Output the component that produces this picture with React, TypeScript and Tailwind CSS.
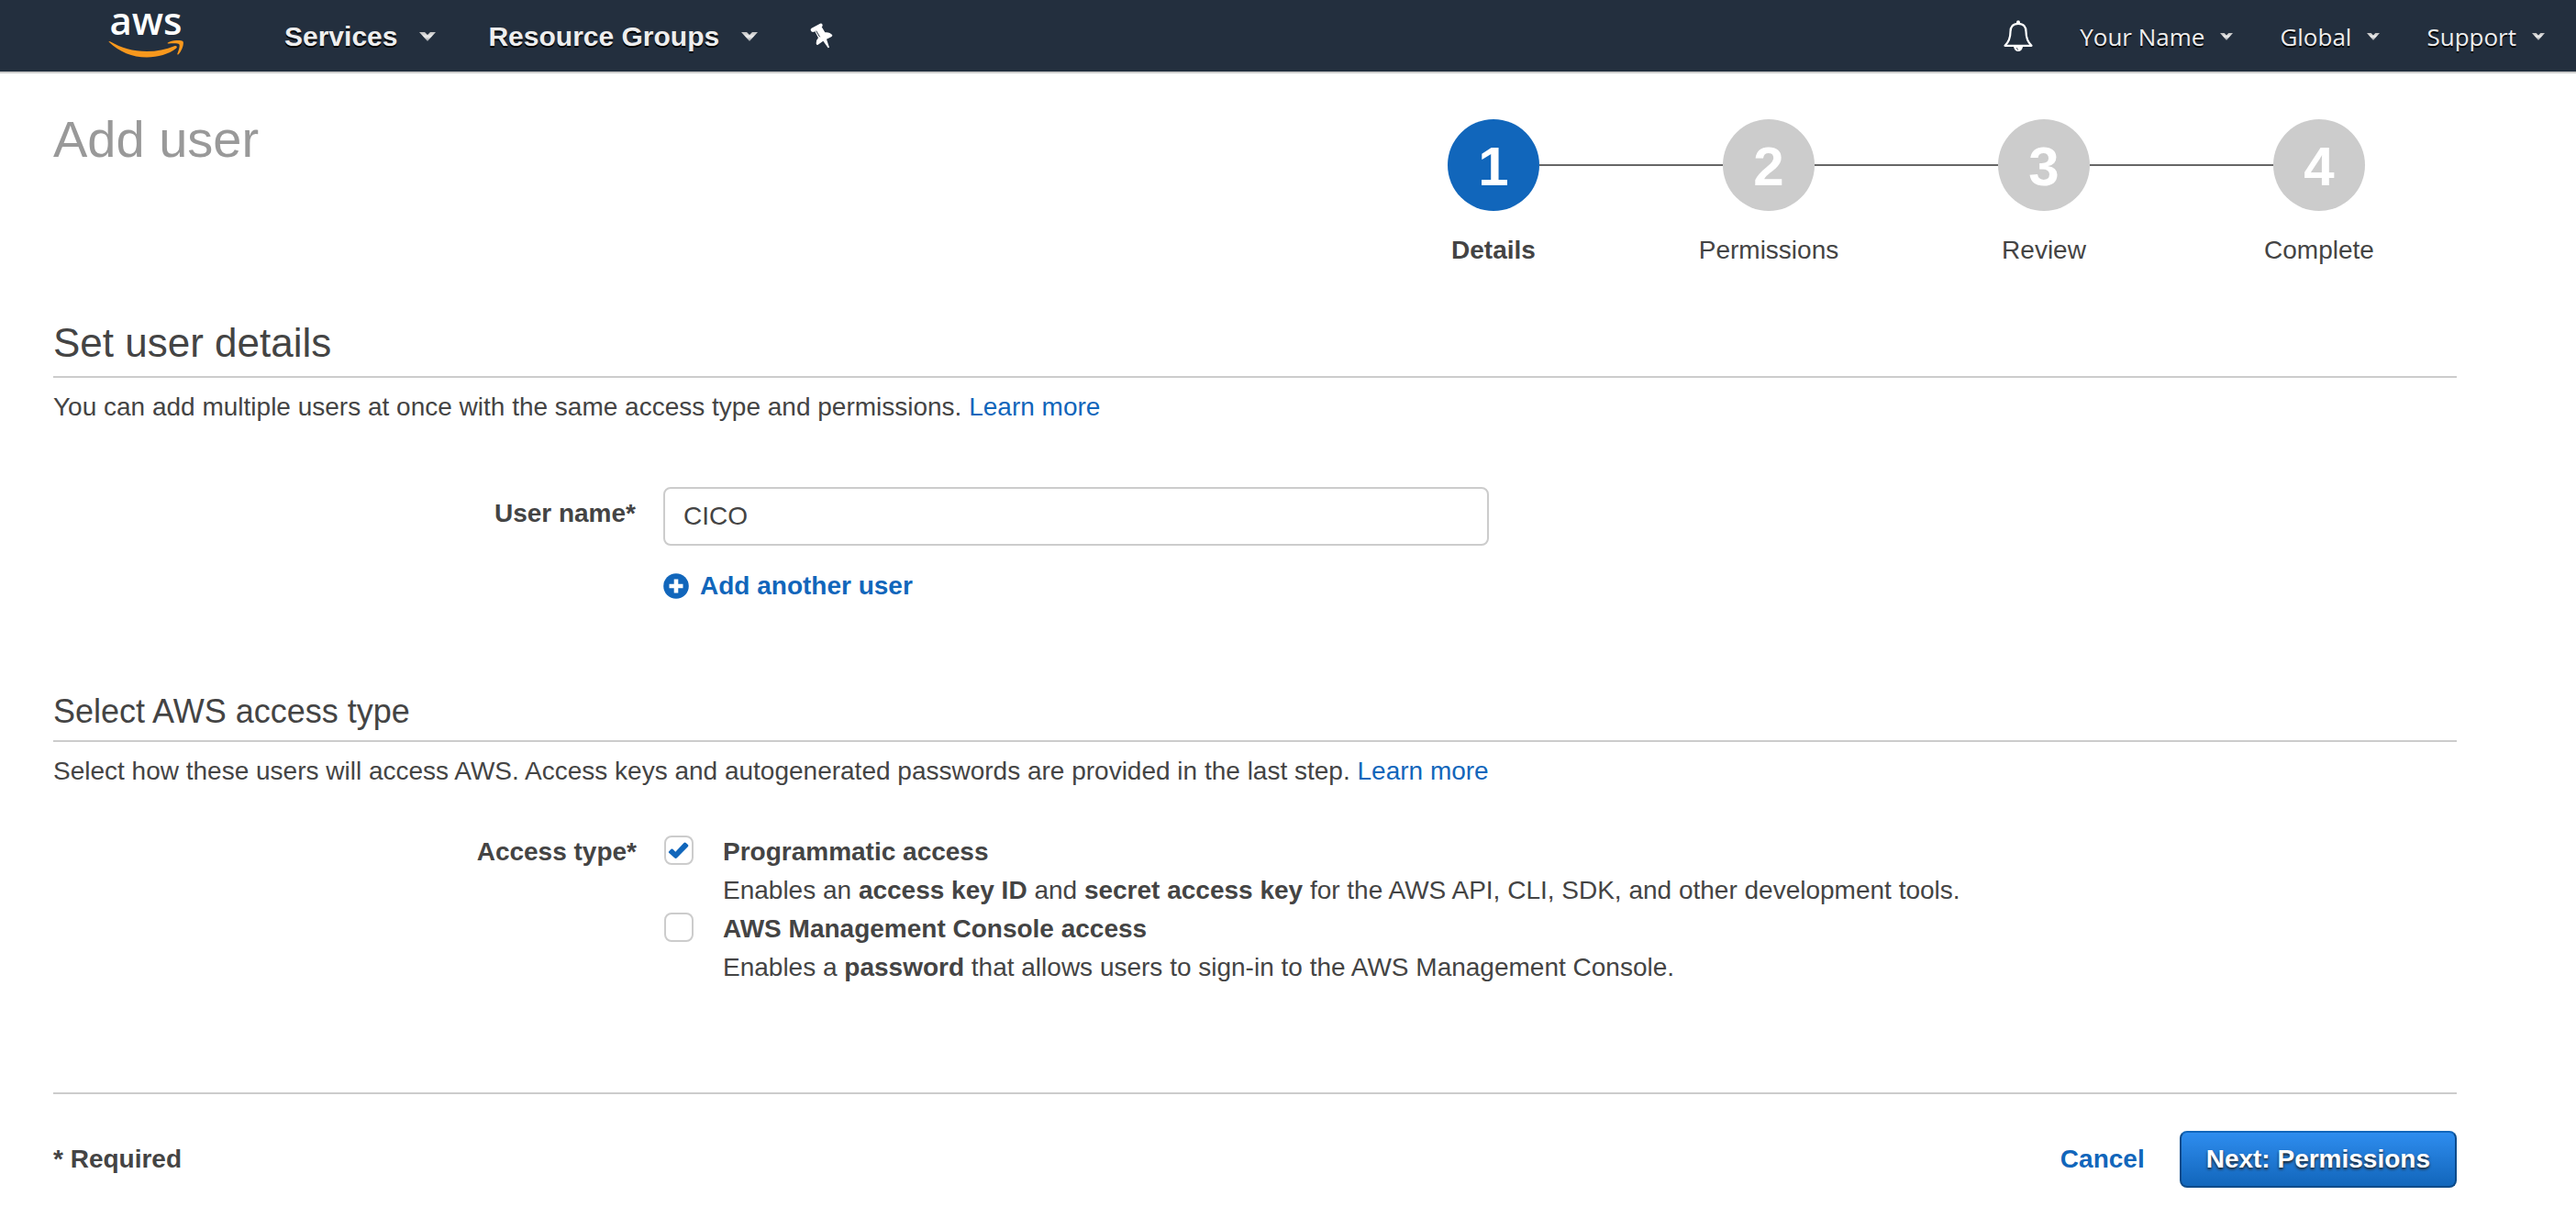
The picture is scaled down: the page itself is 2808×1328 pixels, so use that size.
import { useState, type ReactNode } from 'react';

function Caret({ small = false }: { small?: boolean }) {
  return (
    <svg viewBox="0 0 18 10" className={small ? 'h-2 w-3.5' : 'h-2.5 w-[18px]'} aria-hidden="true">
      <defs>
        <linearGradient id={small ? 'caret-s' : 'caret-l'} x1="0" y1="0" x2="0" y2="1">
          <stop offset="0" stopColor="#bfbfbf" />
          <stop offset="0.5" stopColor="#efefef" />
          <stop offset="1" stopColor="#8d9299" />
        </linearGradient>
      </defs>
      <path
        d="M0 0H6L9 3L12 0H18L9 10Z"
        fill={small ? 'url(#caret-s)' : 'url(#caret-l)'}
      />
    </svg>
  );
}

function Logo() {
  return (
    <a href="#" aria-label="aws" className="flex w-[82px] flex-col items-center pb-4">
      <span className="h-11 font-['Open_Sans',sans-serif] text-[42px] leading-[44px] font-semibold text-white">
        aws
      </span>
      <svg viewBox="0 0 82 19" className="h-[19px] w-[82px]" fill="#f8981d" aria-hidden="true">
        <path d="M1 2C0 1 1 0.5 2.5 1.5C14 8 27 12 42 12C53 12 63 10 72 6.2C74 5.4 76 7 74 8.8C66 15 54 18.500 42 18.500C26 18.500 12 12.500 1 2Z" />
        <path d="M65 2.500C70 -0.500 80 -0.800 81.500 1.200C82.800 3.500 80.500 11.500 76.500 15.200C75.800 15.800 75 15.300 75.400 14.500C76.500 11.500 78.500 6 77.300 4.300C76 2.700 70 3.100 66 3.500C64.800 3.600 64.200 3 65 2.500Z" />
      </svg>
    </a>
  );
}

function Pin() {
  return (
    <svg viewBox="0 0 75 84" className="h-7 w-[25px]" aria-hidden="true">
      <path
        d="M2 24Q1 19 5 17L33 2Q41 0 41 8Q41 11 38 13L49 31Q64 29 73 40Q73 44 69 46L54 53L63 80L59 82L43 59L26 71Q21 74 20 67Q19 57 27 49L16 28L10 30Q4 30 2 24Z"
        fill="#fff"
      />
      <path d="M20 26L32 46" stroke="#232f3e" strokeWidth="3" />
    </svg>
  );
}

function Bell() {
  return (
    <svg viewBox="0 0 32 34" className="h-[34px] w-8" fill="none" aria-hidden="true">
      <circle cx="16" cy="2.200" r="2" fill="#fff" />
      <path
        d="M16 3.800C10 3.800 7.500 7.500 7.500 12.500C7.500 20 5.500 24 1.500 27.800H30.500C26.500 24 24.500 20 24.500 12.500C24.500 7.500 22 3.800 16 3.800Z"
        stroke="#fff"
        strokeWidth="2.200"
        strokeLinejoin="round"
      />
      <path d="M11 29H21Q20 34 16 34Q12 34 11 29Z" fill="#fff" />
      <path d="M14.500 30Q14.500 32 16 32.500" stroke="#232f3e" strokeWidth="0.800" />
    </svg>
  );
}

function PrimaryMenu({ children }: { children: ReactNode }) {
  return (
    <button className="flex items-center gap-6 pt-0.5 text-[30px] leading-10 font-bold whitespace-nowrap text-[#eee] [text-shadow:0_2px_0_#000]">
      {children}
      <Caret />
    </button>
  );
}

function SecondaryMenu({ children }: { children: ReactNode }) {
  return (
    <button className="flex items-center gap-[17px] pt-0.5 font-['Open_Sans',sans-serif] text-[26px] leading-10 font-medium whitespace-nowrap text-[#eee] [text-shadow:0_2px_0_#000]">
      {children}
      <Caret small />
    </button>
  );
}

function Header() {
  return (
    <header className="flex h-20 items-center justify-between border-b-2 border-[#ccc] bg-[#232f3e] pr-[34px] pl-[118px]">
      <nav className="flex items-center" aria-label="Main">
        <Logo />
        <div className="ml-[110px] flex items-center gap-[57px]">
          <PrimaryMenu>Services</PrimaryMenu>
          <PrimaryMenu>Resource Groups</PrimaryMenu>
          <button aria-label="Pin shortcuts">
            <Pin />
          </button>
        </div>
      </nav>
      <div className="flex items-center gap-[51px]">
        <button aria-label="Notifications">
          <Bell />
        </button>
        <SecondaryMenu>Your Name</SecondaryMenu>
        <SecondaryMenu>Global</SecondaryMenu>
        <SecondaryMenu>Support</SecondaryMenu>
      </div>
    </header>
  );
}

const steps = ['Details', 'Permissions', 'Review', 'Complete'];

function Stepper() {
  return (
    <ol className="grid w-[1200px] grid-cols-4">
      {steps.map((label, i) => (
        <li key={label} className="flex flex-col items-center">
          <div className="flex w-full items-center">
            <span className={i === 0 ? 'h-0.5 flex-1' : 'h-0.5 flex-1 bg-[#666]'} />
            <span
              className={
                i === 0
                  ? 'flex size-[100px] items-center justify-center rounded-full bg-[#1166bb] pt-1 text-[60px] leading-[60px] font-bold text-white'
                  : 'flex size-[100px] items-center justify-center rounded-full bg-[#ccc] pt-1 text-[60px] leading-[60px] font-bold text-white'
              }
            >
              {i + 1}
            </span>
            <span className={i === steps.length - 1 ? 'h-0.5 flex-1' : 'h-0.5 flex-1 bg-[#666]'} />
          </div>
          <span className={i === 0 ? 'mt-[22px] font-bold' : 'mt-[22px]'}>{label}</span>
        </li>
      ))}
    </ol>
  );
}

function LearnMore() {
  return (
    <a href="#" className="text-[#1166bb]">
      Learn more
    </a>
  );
}

type AccessOptionProps = {
  id: string;
  title: string;
  defaultChecked?: boolean;
  children: ReactNode;
};

function AccessOption({ id, title, defaultChecked, children }: AccessOptionProps) {
  return (
    <div className="flex items-start gap-8">
      <span className="mt-[3px] grid size-8 shrink-0">
        <input
          id={id}
          type="checkbox"
          defaultChecked={defaultChecked}
          className="peer col-start-1 row-start-1 size-8 appearance-none rounded-lg border-2 border-[#ccc] bg-white"
        />
        <svg
          viewBox="0 0 32 32"
          className="pointer-events-none invisible col-start-1 row-start-1 size-8 peer-checked:visible"
          fill="#1166bb"
          aria-hidden="true"
        >
          <path d="M5 17.500L7.500 14.800Q8.500 14 9.400 14.800L12.300 17.800L21.500 8Q22.600 7.200 23.700 8L26 10Q26.800 11 26 12L14 24.300Q12.600 25.600 11.200 24.300L5 18.700Q4.500 18.100 5 17.500Z" />
        </svg>
      </span>
      <div>
        <label htmlFor={id} className="block font-bold">
          {title}
        </label>
        <p>{children}</p>
      </div>
    </div>
  );
}

export default function App() {
  const [name, setName] = useState('CICO');

  return (
    <div className="min-h-screen bg-white font-['Liberation_Sans',Arial,sans-serif] text-[28px] leading-[42px] text-[#444]">
      <Header />
      <main className="pr-[130px] pl-[58px]">
        <div className="flex items-start justify-between pt-10">
          <h1 className="text-[56px] leading-[64px] text-[#999]">Add user</h1>
          <div className="pt-2.5">
            <Stepper />
          </div>
        </div>

        <section className="mt-[54px]">
          <h2 className="border-b-2 border-[#ccc] pb-2.5 text-[44px] leading-[52px]">
            Set user details
          </h2>
          <p className="mt-[11px]">
            You can add multiple users at once with the same access type and permissions.{' '}
            <LearnMore />
          </p>
          <div className="mt-[66px] flex items-start gap-[30px]">
            <label htmlFor="user-name" className="mt-2 w-[635px] text-right font-bold">
              User name*
            </label>
            <div>
              <input
                id="user-name"
                type="text"
                value={name}
                onChange={(e) => setName(e.target.value)}
                className="block h-16 w-[900px] rounded-lg border-2 border-[#ccc] bg-white px-5"
              />
              <button className="mt-[23px] flex items-center gap-3 font-bold text-[#1166bb]">
                <svg viewBox="0 0 28 28" className="size-7" aria-hidden="true">
                  <circle cx="14" cy="14" r="13.800" fill="#1166bb" />
                  <path d="M14 6.500V21.500M6.500 14H21.500" stroke="#fff" strokeWidth="4.600" />
                </svg>
                Add another user
              </button>
            </div>
          </div>
        </section>

        <section className="mt-[94px]">
          <h2 className="border-b-2 border-[#ccc] pb-[9px] text-[36px] leading-[44px]">
            Select AWS access type
          </h2>
          <p className="mt-[11px]">
            Select how these users will access AWS. Access keys and autogenerated passwords are
            provided in the last step. <LearnMore />
          </p>
          <fieldset className="mt-[46px] flex items-start gap-[30px]" aria-labelledby="access-type">
            <span id="access-type" className="w-[636px] text-right font-bold">
              Access type*
            </span>
            <div>
              <AccessOption id="programmatic" title="Programmatic access" defaultChecked>
                Enables an <b>access key ID</b> and <b>secret access key</b> for the AWS API, CLI,
                SDK, and other development tools.
              </AccessOption>
              <AccessOption id="console" title="AWS Management Console access">
                Enables a <b>password</b> that allows users to sign-in to the AWS Management
                Console.
              </AccessOption>
            </div>
          </fieldset>
        </section>

        <footer className="mt-[115px] flex items-center justify-between border-t-2 border-[#ccc] pt-10 font-bold">
          <span>* Required</span>
          <div className="flex items-center gap-[38px]">
            <button className="text-[#1166bb]">Cancel</button>
            <button className="h-[62px] rounded-lg border-2 border-[#0c4b8a] border-t-[#1166bb] bg-linear-to-b from-[#2e8def] to-[#1166bb] px-[27px] text-white [text-shadow:0_2px_3px_#222]">
              Next: Permissions
            </button>
          </div>
        </footer>
      </main>
    </div>
  );
}
